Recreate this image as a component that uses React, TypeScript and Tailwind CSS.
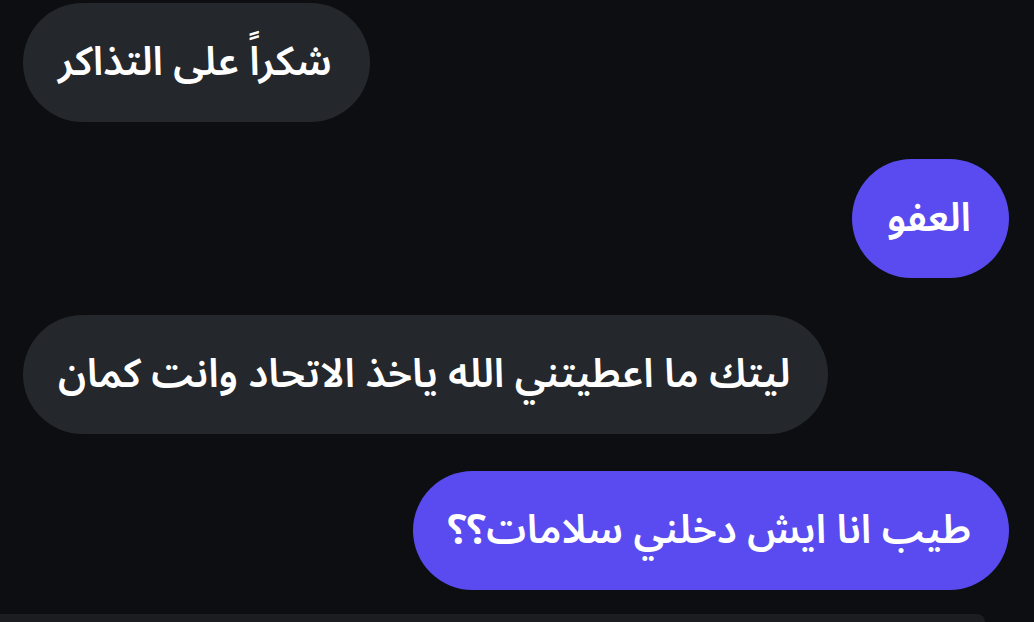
import React from 'react';

type Msg = { id: number; text: string; mine: boolean };

const messages: Msg[] = [
  { id: 1, text: 'شكراً على التذاكر', mine: false },
  { id: 2, text: 'العفو', mine: true },
  { id: 3, text: 'ليتك ما اعطيتني الله ياخذ الاتحاد وانت كمان', mine: false },
  { id: 4, text: 'طيب انا ايش دخلني سلامات؟؟', mine: true },
];

export default function App() {
  return (
    <div
      className="w-[1034px] h-[622px] overflow-hidden bg-[#0c0e12] flex flex-col"
      style={{ fontFamily: '"Noto Sans Arabic", "DejaVu Sans", sans-serif' }}
    >
      <div className="flex-1 flex flex-col gap-[37px] pt-[3px] px-[23px]">
        {messages.map((m) => (
          <div key={m.id} className={m.mine ? 'flex justify-end pr-[2px]' : 'flex justify-start'}>
            <div
              dir="rtl"
              className={
                'h-[119px] flex items-center pl-[35px] pr-[38px] rounded-full text-white text-[40px] font-semibold ' +
                (m.mine ? 'bg-[#5a4bf0]' : 'bg-[#24272b]')
              }
            >
              {m.text}
            </div>
          </div>
        ))}
      </div>
      {/* composer bar peeking at the bottom */}
      <div className="h-[8px] w-[985px] bg-[#1c1d20] rounded-tr-[24px]" />
    </div>
  );
}
